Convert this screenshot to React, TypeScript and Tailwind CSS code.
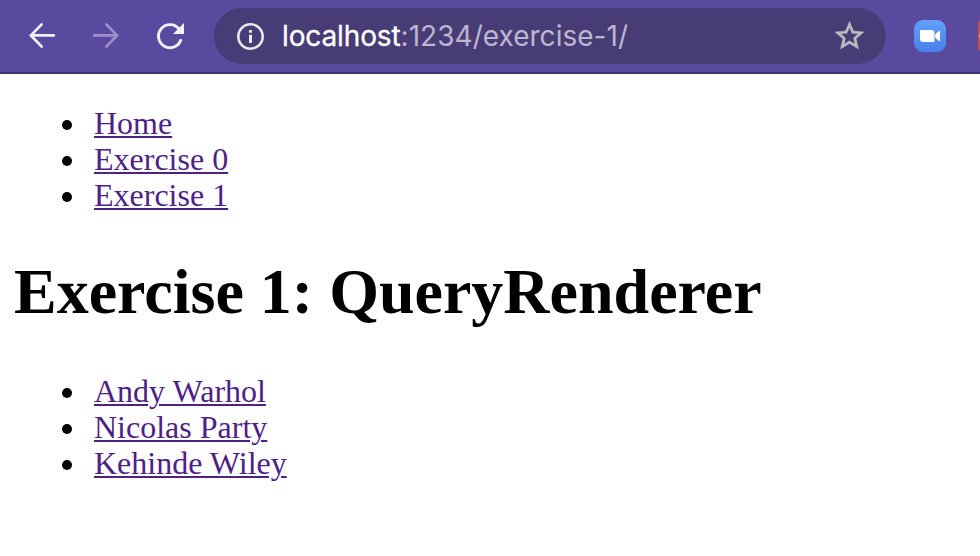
type LinkListProps = { items: string[] };

function LinkList({ items }: LinkListProps) {
  return (
    <ul className="pl-[62px] text-[32px] leading-[36px]">
      {items.map((item) => (
        <li key={item} className="flex h-9 items-start">
          <span className="mt-[15px] mr-[22px] size-[10px] shrink-0 rounded-full bg-black" />
          <a
            href="#"
            className="text-[#4e2186] underline decoration-[2px] underline-offset-[2px]"
          >
            {item}
          </a>
        </li>
      ))}
    </ul>
  );
}

function Toolbar() {
  return (
    <header className="flex h-[74px] items-start overflow-hidden border-b-2 border-[#3f3272] bg-[#5a4a9f]">
      <div className="flex h-[72px] w-[214px] shrink-0 items-center text-[#f3f1f8]">
        <svg className="ml-[28px] h-[28px] w-[28px] shrink-0" viewBox="0 0 28 28" fill="none" stroke="currentColor" strokeWidth="2.7" strokeLinecap="round">
          <path d="M25.8 13.4H3.5M13.700 2.400 2.900 13.400l10.800 11.200" />
        </svg>
        <svg className="ml-[36px] h-[28px] w-[28px] shrink-0 text-[#9d90c8]" viewBox="0 0 28 28" fill="none" stroke="currentColor" strokeWidth="2.7" strokeLinecap="round">
          <path d="M2.200 13.400H24.500M14.300 2.400l10.800 11-10.800 11.200" />
        </svg>
        <svg className="ml-[36px] h-[28px] w-[28px] shrink-0" viewBox="0 0 28 28" fill="none">
          <path d="M23 7A11.5 11.5 0 1 0 24.7 18.4" stroke="currentColor" strokeWidth="2.9" strokeLinecap="round" />
          <path d="M28 1v11H17z" fill="currentColor" />
        </svg>
      </div>
      <div className="mt-2 flex h-14 w-[672px] shrink-0 items-center rounded-full bg-[#483c77] pr-[21px] pl-[22px]">
        <svg className="h-[28px] w-[28px] shrink-0" viewBox="0 0 28 28" fill="none">
          <circle cx="14.5" cy="14.5" r="12.2" stroke="#e9e8ec" strokeWidth="2.6" />
          <path d="M13 8h3v2.7h-3zM13 12.7h3V21h-3z" fill="#e9e8ec" />
        </svg>
        <span className="ml-[18px] flex-1 font-['Inter',sans-serif] text-[28px] leading-[36px] tracking-[0.03px] whitespace-nowrap text-[#bdb6d0]">
          <span className="tracking-[-0.12px] text-white [-webkit-text-stroke:0.3px_white]">localhost</span>:1234/exercise-1/
        </span>
        <svg className="h-[30px] w-[30px] shrink-0" viewBox="2 1.7 20.690 20.690" fill="#bdbcbc" stroke="#bdbcbc" strokeWidth="0.3">
          <path d="M22 9.24l-7.19-.62L12 2 9.19 8.63 2 9.24l5.46 4.73L5.82 21 12 17.27 18.18 21l-1.63-7.03L22 9.24zM12 15.4l-3.76 2.27 1-4.28-3.32-2.88 4.38-.38L12 6.1l1.71 4.04 4.38.38-3.32 2.88 1 4.28L12 15.4z" />
        </svg>
      </div>
      <div className="mt-5 ml-7 flex h-8 w-8 shrink-0 items-center justify-center rounded-[9px] bg-linear-to-b from-[#62a0f8] to-[#477fee]">
        <svg className="h-8 w-8" viewBox="0 0 32 32" fill="white">
          <path d="M7 10h10.300a3.200 3.200 0 0 1 3.200 3.200V21a1 1 0 0 1-1 1H9.200A3.200 3.200 0 0 1 6 18.800V11a1 1 0 0 1 1-1zM21.200 14.300 25 11.100c.5-.4 1-.2 1 .5v8.800c0 .7-.5.9-1 .5l-3.800-3.200z" />
        </svg>
      </div>
      <div className="mt-5 ml-8 flex h-8 w-8 shrink-0 items-center rounded-[4px] bg-[#cf5147]">
        <span className="ml-px h-0.5 w-4 bg-[#e88b83]" />
      </div>
    </header>
  );
}

export default function App() {
  return (
    <div className="h-[556px] overflow-hidden bg-white font-['Liberation_Serif',serif] text-black">
      <Toolbar />
      <main className="pt-[31px]">
        <LinkList items={["Home", "Exercise 0", "Exercise 1"]} />
        <h1 className="mt-[42px] mb-[44px] pl-[14px] text-[64px] leading-[74px] font-bold whitespace-nowrap">
          Exercise 1: QueryRenderer
        </h1>
        <LinkList items={["Andy Warhol", "Nicolas Party", "Kehinde Wiley"]} />
      </main>
    </div>
  );
}
